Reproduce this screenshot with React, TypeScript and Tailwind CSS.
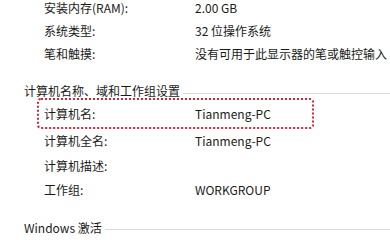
const font = { fontFamily: '"Noto Sans CJK SC", "Noto Sans", sans-serif' };

type Row = { label: string; value?: string };

const systemRows: Row[] = [
  { label: '安装内存(RAM):', value: '2.00 GB' },
  { label: '系统类型:', value: '32 位操作系统' },
  { label: '笔和触摸:', value: '没有可用于此显示器的笔或触控输入' },
];

const nameRows: Row[] = [
  { label: '计算机全名:', value: 'Tianmeng-PC' },
  { label: '计算机描述:' },
  { label: '工作组:', value: 'WORKGROUP' },
];

const SectionTitle = ({ title }: { title: string }) => (
  <div className="flex items-center pl-[24px] h-[19px] leading-[19px]">
    <span className="whitespace-nowrap">{title}</span>
    <div className="flex-1 h-px bg-[#d9d9d9] ml-[3px] mt-[5px]" />
  </div>
);

const InfoRow = ({ row, height }: { row: Row; height: string }) => (
  <div className={`flex pl-[44px] whitespace-nowrap ${height}`}>
    <div className="w-[151px] shrink-0">{row.label}</div>
    <div>{row.value}</div>
  </div>
);

export default function App() {
  return (
    <div
      className="w-[390px] h-[237px] overflow-hidden bg-white text-[12px] text-[#1a1a1a]"
      style={font}
    >
      <div className="-mt-[4px]">
        {systemRows.map((row) => (
          <InfoRow key={row.label} row={row} height="h-[23px] leading-[23px]" />
        ))}
      </div>

      <div className="mt-[16px]">
        <SectionTitle title="计算机名称、域和工作组设置" />
      </div>

      {/* highlighted computer name */}
      <div className="-mt-[2px] ml-[37px] w-[277px] h-[31px] border-2 border-dotted border-[#c8283c] rounded-[4px] flex items-center pl-[5px] whitespace-nowrap leading-[27px]">
        <div className="w-[151px] shrink-0 -mt-[1px]">计算机名:</div>
        <div className="-mt-[1px]">Tianmeng-PC</div>
      </div>

      <div>
        {nameRows.map((row) => (
          <InfoRow key={row.label} row={row} height="h-[24.5px] leading-[24px]" />
        ))}
      </div>

      <div className="mt-[15px]">
        <SectionTitle title="Windows 激活" />
      </div>
    </div>
  );
}
